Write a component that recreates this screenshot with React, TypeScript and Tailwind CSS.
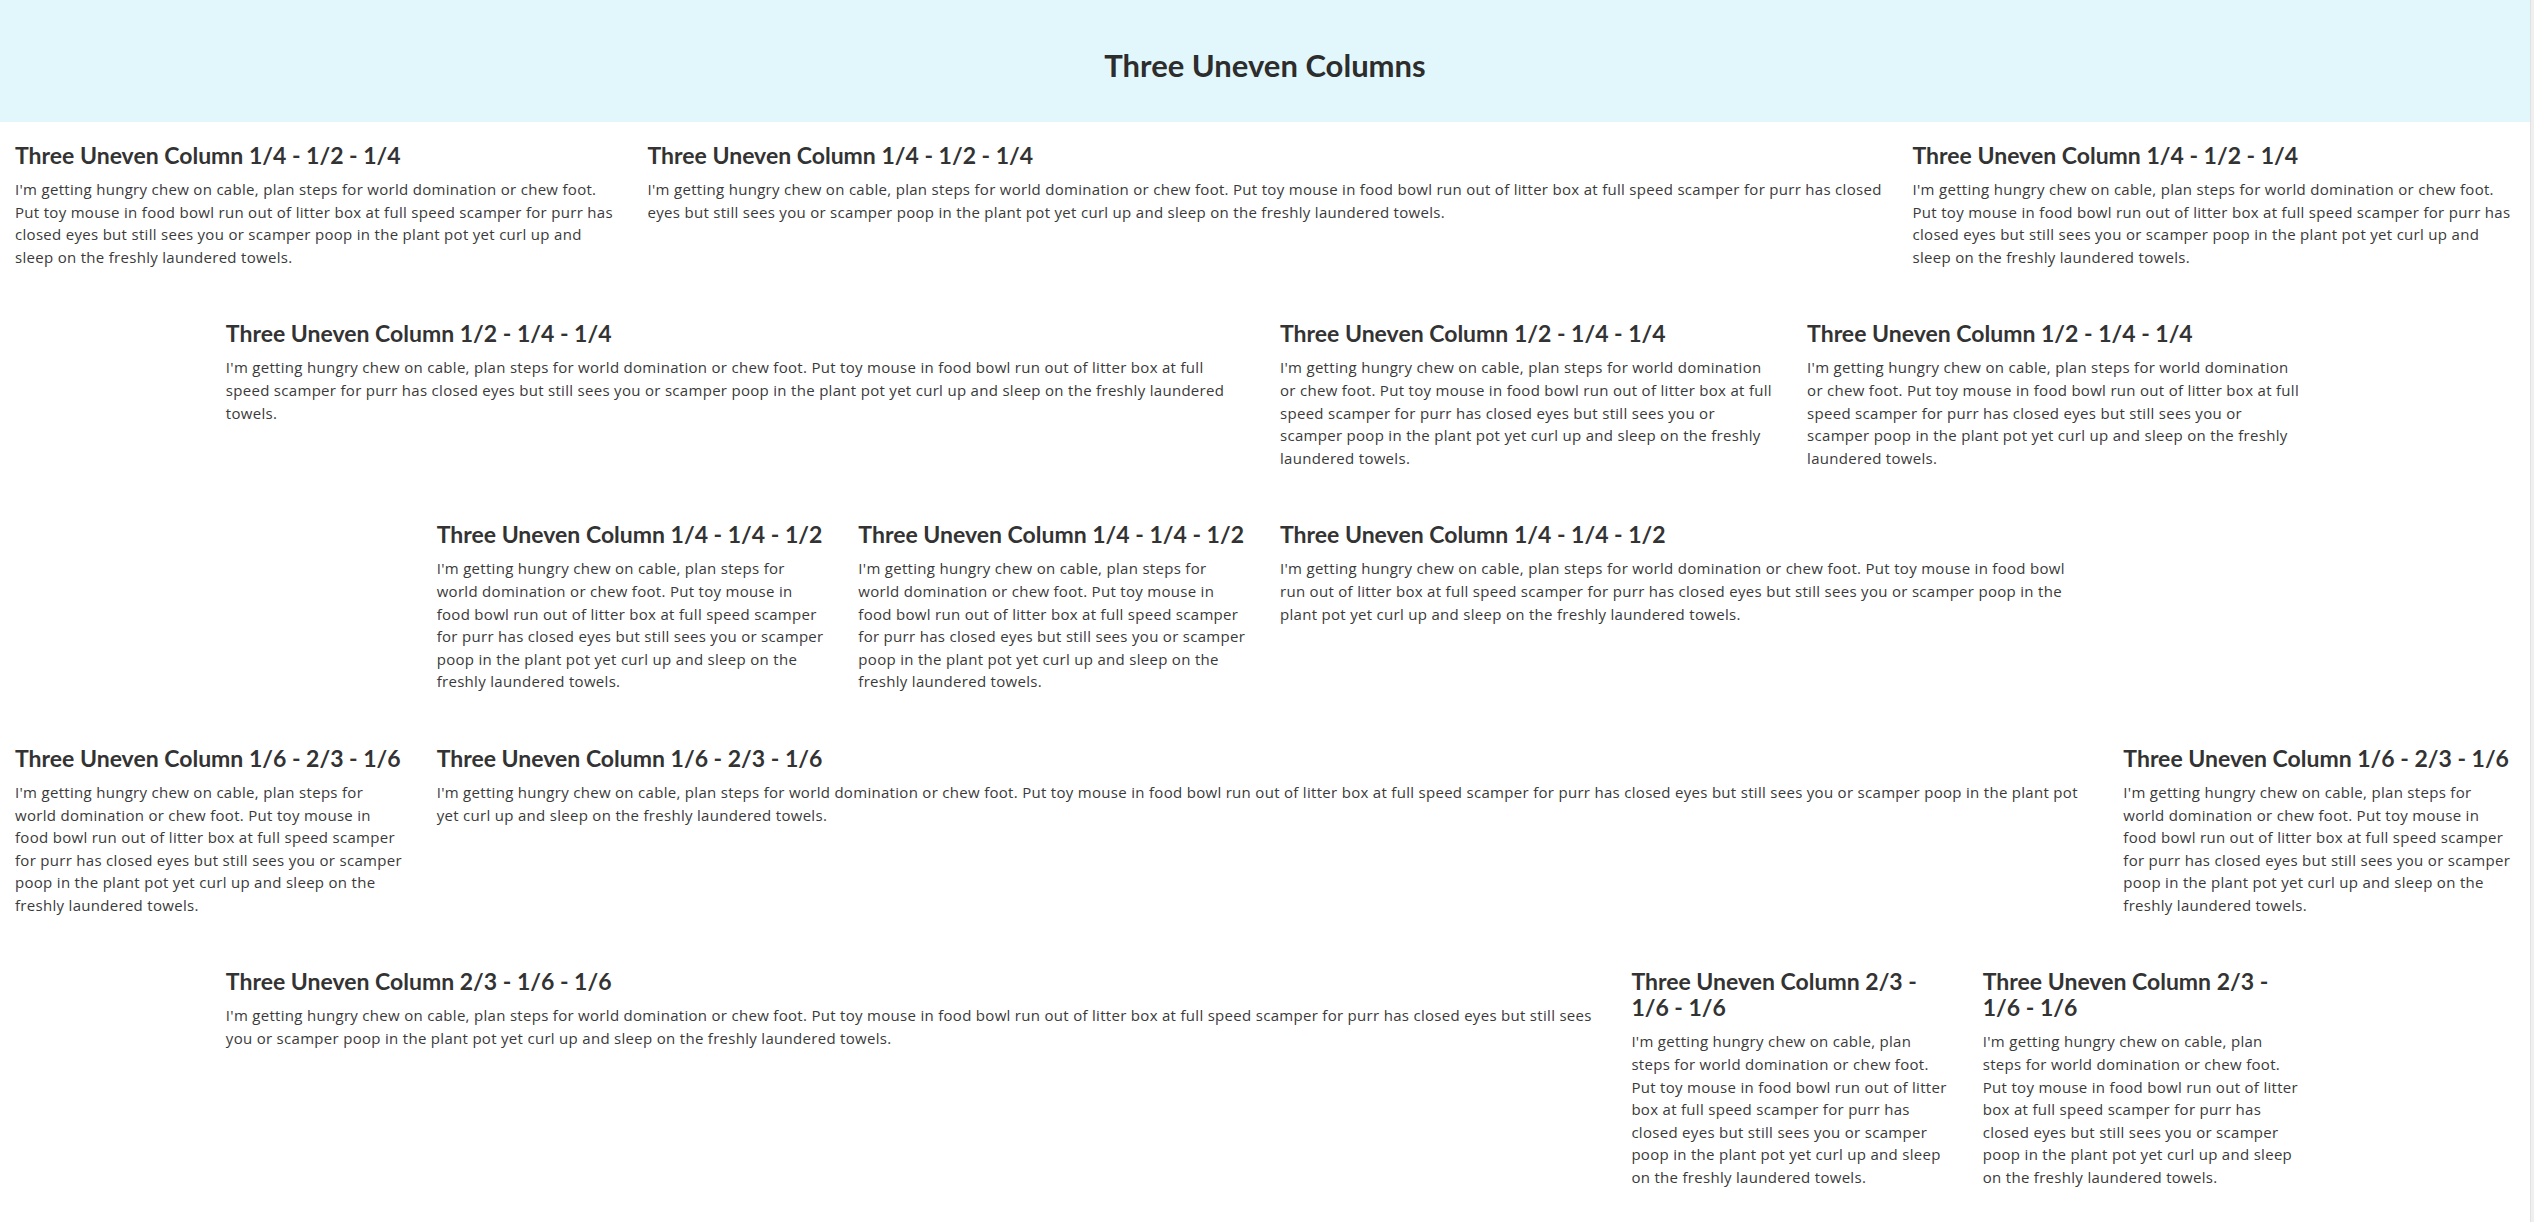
import React from 'react';

const TEXT =
    "I'm getting hungry chew on cable, plan steps for world domination or chew foot. Put toy mouse in food bowl run out of litter box at full speed scamper for purr has closed eyes but still sees you or scamper poop in the plant pot yet curl up and sleep on the freshly laundered towels.";

type Col = { width: string };

interface RowDef {
    label: string;
    wrap: string;
    cols: Col[];
}

const ROWS: RowDef[] = [
    { label: '1/4 - 1/2 - 1/4', wrap: 'w-full', cols: [{ width: 'w-1/4' }, { width: 'w-1/2' }, { width: 'w-1/4' }] },
    { label: '1/2 - 1/4 - 1/4', wrap: 'w-5/6 mx-auto', cols: [{ width: 'w-1/2' }, { width: 'w-1/4' }, { width: 'w-1/4' }] },
    { label: '1/4 - 1/4 - 1/2', wrap: 'w-2/3 mx-auto', cols: [{ width: 'w-1/4' }, { width: 'w-1/4' }, { width: 'w-1/2' }] },
    { label: '1/6 - 2/3 - 1/6', wrap: 'w-full', cols: [{ width: 'w-1/6' }, { width: 'w-2/3' }, { width: 'w-1/6' }] },
    { label: '2/3 - 1/6 - 1/6', wrap: 'w-5/6 mx-auto', cols: [{ width: 'w-2/3' }, { width: 'w-1/6' }, { width: 'w-1/6' }] },
];

const Column: React.FC<{ width: string; label: string }> = ({ width, label }) => (
    <div className={`${width} shrink-0 px-[15px]`}>
        <h3 className="font-['Lato',sans-serif] font-bold text-[23px] leading-[26px] text-[#333] mb-[10px]">
            Three Uneven Column {label}
        </h3>
        <p className="font-['Open_Sans',sans-serif] text-[15px] leading-[22.6px] tracking-[0.3px] text-[#3a3a3a] mb-[32px]">
            {TEXT}
        </p>
    </div>
);

export default function App() {
    return (
        <div className="h-screen overflow-hidden flex bg-white">
            <div className="flex-1 min-w-0">
                <header className="h-[122px] bg-[#e2f7fb] flex items-center justify-center pt-[8px]">
                    <h1 className="font-['Lato',sans-serif] font-bold text-[31px] text-[#2d2d2d]">
                        Three Uneven Columns
                    </h1>
                </header>
                <main>
                    {ROWS.map((row, i) => (
                        <section key={i} className={`${row.wrap} flex pt-[20px]`}>
                            {row.cols.map((c, j) => (
                                <Column key={j} width={c.width} label={row.label} />
                            ))}
                        </section>
                    ))}
                </main>
            </div>
            <div className="w-[4px] shrink-0 bg-[#efefef] border-l border-[#e2e2e2]" />
        </div>
    );
}
